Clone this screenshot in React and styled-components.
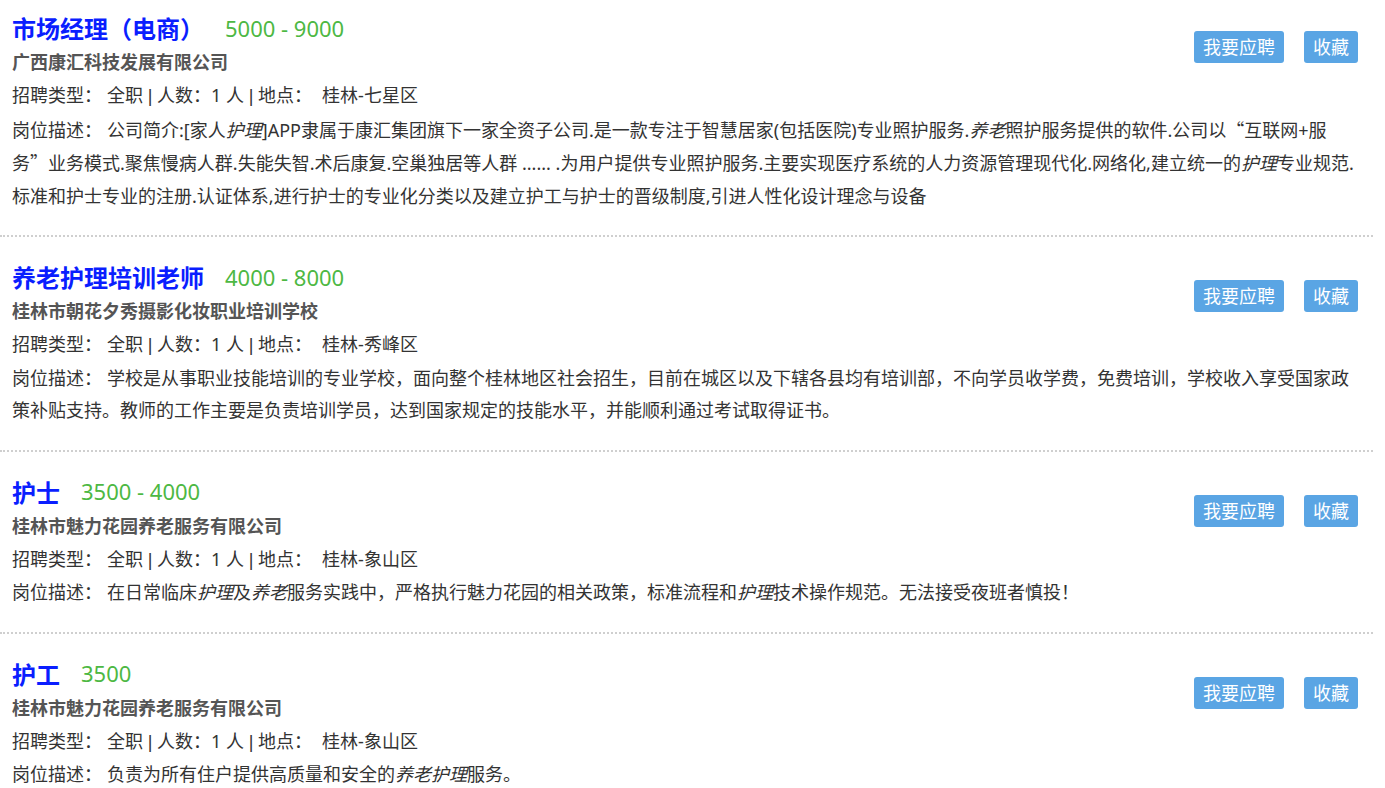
import React from "react";
import styled, { createGlobalStyle } from "styled-components";

const GlobalStyle = createGlobalStyle`
  body {
    margin: 0;
    background: #fff;
    font-family: "Noto Sans", "Noto Sans CJK SC", sans-serif;
    color: #333;
  }
`;

// full-width CJK quotes, as the CJK font draws them
const Quote = styled.span`
  font-family: "Noto Sans CJK SC", sans-serif;
`;

const jobs = [
  {
    title: "市场经理（电商）",
    salary: "5000 - 9000",
    company: "广西康汇科技发展有限公司",
    place: "桂林-七星区",
    desc: (
      <>
        公司简介:[家人<em>护理</em>]APP隶属于康汇集团旗下一家全资子公司.是一款专注于智慧居家(包括医院)专业照护服务.
        <em>养老</em>照护服务提供的软件.公司以<Quote>“</Quote>互联网+服务<Quote>”</Quote>业务模式.聚焦慢病人群.失能失智.术后康复.空巢独居等人群 ...... .为用户提供专业照护服务.主要实现医疗系统的人力资源管理现代化.网络化,建立统一的<em>护理</em>专业规范.标准和护士专业的注册.认证体系,进行护士的专业化分类以及建立护工与护士的晋级制度,引进人性化设计理念与设备
      </>
    ),
  },
  {
    title: "养老护理培训老师",
    salary: "4000 - 8000",
    company: "桂林市朝花夕秀摄影化妆职业培训学校",
    place: "桂林-秀峰区",
    desc: "学校是从事职业技能培训的专业学校，面向整个桂林地区社会招生，目前在城区以及下辖各县均有培训部，不向学员收学费，免费培训，学校收入享受国家政策补贴支持。教师的工作主要是负责培训学员，达到国家规定的技能水平，并能顺利通过考试取得证书。",
  },
  {
    title: "护士",
    salary: "3500 - 4000",
    company: "桂林市魅力花园养老服务有限公司",
    place: "桂林-象山区",
    desc: (
      <>
        在日常临床<em>护理</em>及<em>养老</em>服务实践中，严格执行魅力花园的相关政策，标准流程和<em>护理</em>技术操作规范。无法接受夜班者慎投！
      </>
    ),
  },
  {
    title: "护工",
    salary: "3500",
    company: "桂林市魅力花园养老服务有限公司",
    place: "桂林-象山区",
    desc: (
      <>
        负责为所有住户提供高质量和安全的<em>养老</em><em>护理</em>服务。
      </>
    ),
  },
];

const List = styled.div`
  width: 1373px;
`;

const Card = styled.div`
  padding: 21px 15px 23px 12px;
  border-bottom: 2px dotted #cfcfcf;
  &:first-child {
    padding-top: 9px;
  }
  &:last-child {
    border-bottom: none;
  }
`;

const Head = styled.div`
  display: flex;
  justify-content: space-between;
  align-items: flex-start;
`;

const TitleRow = styled.div`
  display: flex;
  align-items: center;
  height: 37px;
`;

const Title = styled.h3`
  margin: 0;
  font-size: 24px;
  font-weight: bold;
  color: #0a1eff;
`;

const Salary = styled.span`
  margin-left: 21px;
  font-size: 22px;
  color: #4db843;
`;

const Company = styled.div`
  font-size: 18px;
  font-weight: bold;
  color: #555;
  line-height: 33px;
`;

const Actions = styled.div`
  display: flex;
  gap: 20px;
  margin-top: 22px;
`;

const Button = styled.button`
  height: 32px;
  padding: 0 9px;
  border: none;
  border-radius: 3px;
  background: #5aa5e4;
  color: #fff;
  font-family: inherit;
  font-size: 18px;
  line-height: 32px;
  cursor: pointer;
`;

const Line = styled.p`
  margin: 0;
  font-size: 18px;
  line-height: 32.5px;
  color: #333;
  em {
    font-style: italic;
  }
`;

const Label = styled.span`
  margin-right: 5px;
`;

const Sep = styled.span`
  font-family: "Liberation Sans", sans-serif;
`;

const Place = styled.span`
  margin-left: 10px;
`;

function JobCard({ job }) {
  return (
    <Card>
      <Head>
        <div>
          <TitleRow>
            <Title>{job.title}</Title>
            <Salary>{job.salary}</Salary>
          </TitleRow>
          <Company>{job.company}</Company>
        </div>
        <Actions>
          <Button>我要应聘</Button>
          <Button>收藏</Button>
        </Actions>
      </Head>
      <Line>
        <Label>招聘类型：</Label>全职 <Sep>|</Sep> 人数：1 人 <Sep>|</Sep> 地点：
        <Place>{job.place}</Place>
      </Line>
      <Line>
        <Label>岗位描述：</Label>
        {job.desc}
      </Line>
    </Card>
  );
}

export default function App() {
  return (
    <>
      <GlobalStyle />
      <List>
        {jobs.map((job) => (
          <JobCard key={job.title} job={job} />
        ))}
      </List>
    </>
  );
}
